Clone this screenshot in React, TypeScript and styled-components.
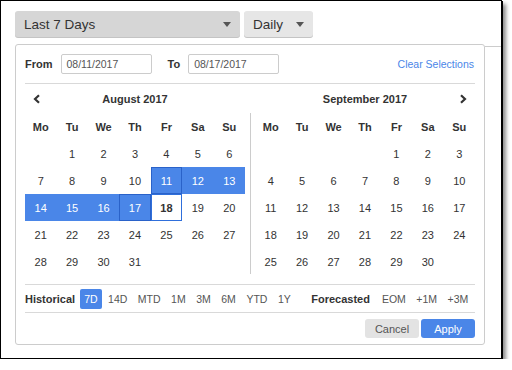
import React from "react";
import styled, { createGlobalStyle } from "styled-components";

const BLUE = "#4a86e8";

const GlobalStyle = createGlobalStyle`
  html, body { margin: 0; padding: 0; background: #fff; }
  body { font-family: "Liberation Sans", Arial, sans-serif; color: #333; }
  * { box-sizing: border-box; }
`;

const Frame = styled.div`
  width: 502px;
  height: 359px;
  border: 1px solid #000;
  box-shadow: 1px 1px 0 #000, 4px 4px 4px rgba(0, 0, 0, 0.45);
  padding: 10px 0 0 14px;
  background: #fff;
`;

const Toolbar = styled.div`
  display: flex;
  gap: 4px;
`;

const Select = styled.div<{ $width: number; $tone: string }>`
  width: ${(p) => p.$width}px;
  height: 26px;
  padding: 0 9px 0 9px;
  display: flex;
  align-items: center;
  justify-content: space-between;
  background: ${(p) => p.$tone};
  border-radius: 3px;
  box-shadow: 0 1px 0 #c4c4c4;
  font-size: 13.5px;
  color: #333;
`;

const Caret = styled.span`
  width: 0;
  height: 0;
  border-left: 4px solid transparent;
  border-right: 4px solid transparent;
  border-top: 5px solid #555;
`;

const PanelRow = styled.div`
  display: flex;
  margin-top: 7px;
`;

const Filler = styled.div`
  flex: 1;
  margin-top: 2px;
  border-top: 1px solid #ccc;
`;

const Panel = styled.div`
  width: 470px;
  border: 1px solid #ccc;
  border-radius: 3px;
  padding: 9px 9px 6px;
  background: #fff;
`;

const TopRow = styled.div`
  display: flex;
  align-items: center;
  height: 30px;
  padding-bottom: 9px;
  border-bottom: 1px solid #d9d9d9;
`;

const Label = styled.span<{ $before?: number; $after?: number }>`
  font-size: 11px;
  font-weight: bold;
  color: #333;
  margin-left: ${(p) => p.$before ?? 0}px;
  margin-right: ${(p) => p.$after ?? 8}px;
`;

const DateInput = styled.div`
  width: 91px;
  height: 20px;
  border: 1px solid #ccc;
  border-radius: 2px;
  padding: 0 5px;
  display: flex;
  align-items: center;
  font-size: 10.5px;
  color: #555;
`;

const ClearLink = styled.span`
  margin-left: auto;
  margin-right: 1px;
  font-size: 10.5px;
  color: ${BLUE};
`;

const Calendars = styled.div`
  display: flex;
  padding-bottom: 9px;
  border-bottom: 1px solid #d9d9d9;
`;

const Month = styled.div`
  flex: 1;
`;

const MonthHead = styled.div`
  height: 29px;
  display: grid;
  grid-template-columns: 24px 1fr 24px;
  align-items: center;
`;

const MonthTitle = styled.div`
  text-align: center;
  font-size: 11px;
  font-weight: bold;
  color: #333;
`;

const Nav = styled.div`
  display: flex;
  justify-content: center;
  align-items: center;
`;

const Divider = styled.div`
  width: 1px;
  height: 161px;
  margin: 29px 4px 0 5px;
  background: #ccc;
`;

const DayGrid = styled.div`
  display: grid;
  grid-template-columns: repeat(7, 1fr);
  grid-auto-rows: 27px;
`;

const DayHead = styled.div`
  display: flex;
  align-items: center;
  justify-content: center;
  font-size: 11px;
  font-weight: bold;
  color: #333;
`;

type DayState = "plain" | "range" | "edge" | "today";

const Day = styled.div<{ $state: DayState }>`
  display: flex;
  align-items: center;
  justify-content: center;
  font-size: 11px;
  font-weight: ${(p) => (p.$state === "today" ? "bold" : "normal")};
  color: ${(p) => (p.$state === "range" || p.$state === "edge" ? "#fff" : "#333")};
  background: ${(p) => (p.$state === "range" || p.$state === "edge" ? BLUE : "transparent")};
  border: 1px solid
    ${(p) =>
      p.$state === "edge" ? "#2a62c9" : p.$state === "today" ? "#2f6fdb" : "transparent"};
`;

const Presets = styled.div`
  display: flex;
  align-items: center;
  height: 28px;
  border-bottom: 1px solid #d9d9d9;
`;

const Preset = styled.span<{ $active?: boolean }>`
  height: 20px;
  line-height: 20px;
  padding: 0 4px;
  margin-right: 2.5px;
  border-radius: 2px;
  font-size: 10.5px;
  color: ${(p) => (p.$active ? "#fff" : "#555")};
  background: ${(p) => (p.$active ? BLUE : "transparent")};
`;

const Actions = styled.div`
  display: flex;
  justify-content: flex-end;
  gap: 2px;
  padding-top: 6px;
`;

const Button = styled.div<{ $primary?: boolean }>`
  width: 54px;
  height: 19px;
  display: flex;
  align-items: center;
  justify-content: center;
  border-radius: 3px;
  font-size: 11px;
  color: ${(p) => (p.$primary ? "#fff" : "#555")};
  background: ${(p) => (p.$primary ? BLUE : "#e3e3e3")};
`;

const Chevron: React.FC<{ dir: "left" | "right" }> = ({ dir }) => (
  <svg width="8" height="10" viewBox="0 0 8 10">
    <polyline
      points={dir === "left" ? "6,1.2 2,5 6,8.8" : "2,1.2 6,5 2,8.8"}
      fill="none"
      stroke="#333"
      strokeWidth="2.2"
    />
  </svg>
);

const WEEK = ["Mo", "Tu", "We", "Th", "Fr", "Sa", "Su"];

const stateFor = (month: number, day: number): DayState => {
  if (month !== 8) return "plain";
  if (day === 11 || day === 17) return "edge";
  if (day > 11 && day < 17) return "range";
  if (day === 18) return "today";
  return "plain";
};

const MonthView: React.FC<{
  title: string;
  month: number;
  offset: number;
  days: number;
  nav: "left" | "right";
}> = ({ title, month, offset, days, nav }) => (
  <Month>
    <MonthHead>
      <Nav>{nav === "left" && <Chevron dir="left" />}</Nav>
      <MonthTitle>{title}</MonthTitle>
      <Nav>{nav === "right" && <Chevron dir="right" />}</Nav>
    </MonthHead>
    <DayGrid>
      {WEEK.map((w) => (
        <DayHead key={w}>{w}</DayHead>
      ))}
      {Array.from({ length: offset }).map((_, i) => (
        <div key={"b" + i} />
      ))}
      {Array.from({ length: days }).map((_, i) => (
        <Day key={i} $state={stateFor(month, i + 1)}>
          {i + 1}
        </Day>
      ))}
    </DayGrid>
  </Month>
);

const HISTORICAL = ["7D", "14D", "MTD", "1M", "3M", "6M", "YTD", "1Y"];
const FORECAST = ["EOM", "+1M", "+3M"];

const App: React.FC = () => (
  <>
    <GlobalStyle />
    <Frame>
      <Toolbar>
        <Select $width={225} $tone="#d6d6d6">
          Last 7 Days
          <Caret />
        </Select>
        <Select $width={69} $tone="#e6e6e6">
          Daily
          <Caret />
        </Select>
      </Toolbar>
      <PanelRow>
        <Panel>
          <TopRow>
            <Label>From</Label>
            <DateInput>08/11/2017</DateInput>
            <Label $before={16}>To</Label>
            <DateInput>08/17/2017</DateInput>
            <ClearLink>Clear Selections</ClearLink>
          </TopRow>
          <Calendars>
            <MonthView title="August 2017" month={8} offset={1} days={31} nav="left" />
            <Divider />
            <MonthView title="September 2017" month={9} offset={4} days={30} nav="right" />
          </Calendars>
          <Presets>
            <Label $after={5}>Historical</Label>
            {HISTORICAL.map((p) => (
              <Preset key={p} $active={p === "7D"}>
                {p}
              </Preset>
            ))}
            <Label $before={14} $after={8}>
              Forecasted
            </Label>
            {FORECAST.map((p) => (
              <Preset key={p}>{p}</Preset>
            ))}
          </Presets>
          <Actions>
            <Button>Cancel</Button>
            <Button $primary>Apply</Button>
          </Actions>
        </Panel>
        <Filler />
      </PanelRow>
    </Frame>
  </>
);

export default App;
